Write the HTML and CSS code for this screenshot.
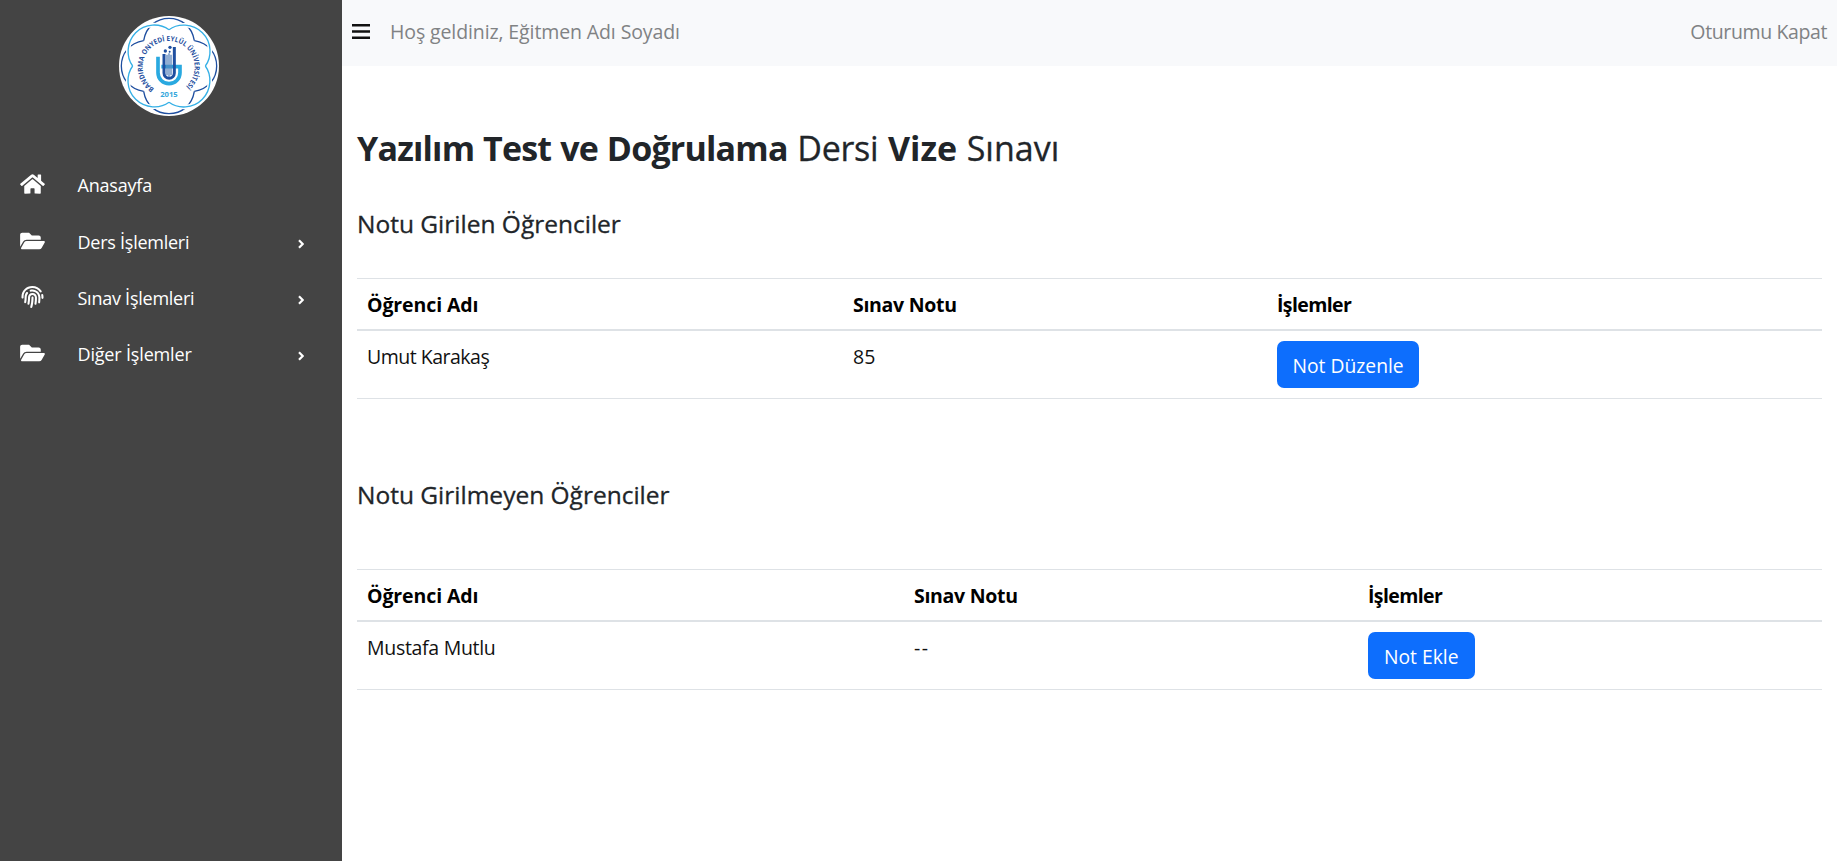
FILE: index.html
```
<!DOCTYPE html>
<html lang="tr">
<head>
<meta charset="utf-8">
<title>Sınav Notları</title>
<link rel="stylesheet" href="styles.css">
</head>
<body>
<svg class="defs" width="0" height="0" aria-hidden="true">
  <symbol id="folder" viewBox="0 0 576 512"><path d="M572.694 292.093L500.27 416.248A63.997 63.997 0 0 1 444.989 448H45.025c-18.523 0-30.064-20.093-20.731-36.093l72.424-124.155A64 64 0 0 1 152 256h399.964c18.523 0 30.064 20.093 20.73 36.093zM152 224h328v-48c0-26.51-21.49-48-48-48H272l-64-64H48C21.49 64 0 85.49 0 112v278.046l69.077-118.418C86.214 242.25 117.989 224 152 224z"/></symbol>
  <symbol id="home" viewBox="0 0 576 512"><path d="M280.37 148.26L96 300.11V464a16 16 0 0 0 16 16l112.06-.29a16 16 0 0 0 15.92-16V368a16 16 0 0 1 16-16h64a16 16 0 0 1 16 16v95.64a16 16 0 0 0 16 16.05L464 480a16 16 0 0 0 16-16V300L295.67 148.26a12.19 12.19 0 0 0-15.3 0zM571.6 251.47L488 182.56V44.05a12 12 0 0 0-12-12h-56a12 12 0 0 0-12 12v72.61L318.47 43a48 48 0 0 0-61 0L4.34 251.47a12 12 0 0 0-1.6 16.9l25.5 31A12 12 0 0 0 45.15 301l235.22-193.74a12.19 12.19 0 0 1 15.3 0L530.9 301a12 12 0 0 0 16.9-1.6l25.5-31a12 12 0 0 0-1.7-16.93z"/></symbol>
  <symbol id="finger" viewBox="0 0 512 512"><path d="M256.12 245.96c-13.25 0-24 10.74-24 24 1.14 72.25-8.14 141.9-27.7 211.55-2.73 9.72 2.15 30.49 23.12 30.49 10.48 0 20.11-6.92 23.09-17.52 13.53-47.91 31.04-125.41 29.48-224.52.01-13.25-10.73-24-23.99-24zm-.86-81.73C194 164.16 151.25 211.3 152.1 265.32c.75 47.75-3.75 95.87-13.37 142.5-2.69 12.98 5.67 25.69 18.64 28.36 12.97 2.68 25.67-5.66 28.36-18.64 10.34-50.09 15.17-101.58 14.37-153.02-.41-25.95 19.92-52.49 54.45-52.34 31.31.47 57.15 25.34 57.62 55.47.77 48.05-2.81 96.33-10.61 143.55-2.17 13.06 6.69 25.42 19.76 27.58 19.97 3.33 26.81-15.1 27.58-19.77 8.28-50.03 12.06-101.21 11.27-152.11-.88-55.8-47.94-101.88-104.91-102.72zm-110.69-19.78c-10.3-8.34-25.37-6.8-33.76 3.48-25.62 31.5-39.39 71.28-38.75 112 .59 37.58-2.47 75.27-9.11 112.05-2.34 13.05 6.31 25.53 19.36 27.89 20.11 3.5 27.07-14.81 27.89-19.36 7.19-39.84 10.5-80.66 9.86-121.33-.47-29.88 9.2-57.88 28-80.97 8.35-10.28 6.79-25.39-3.49-33.76zm109.47-62.33c-15.41-.41-30.87 1.44-45.78 4.97-12.89 3.06-20.87 15.98-17.83 28.89 3.06 12.89 16 20.83 28.89 17.83 11.05-2.61 22.47-3.77 34-3.69 75.43 1.13 137.73 61.5 138.88 134.58.59 37.88-1.28 76.11-5.58 113.63-1.5 13.17 7.95 25.08 21.11 26.58 16.72 1.95 25.51-11.88 26.58-21.11a929.06 929.06 0 0 0 5.89-119.85c-1.56-98.75-85.07-180.33-186.16-181.83zm252.07 121.45c-2.86-12.92-15.51-21.2-28.61-18.27-12.94 2.86-21.12 15.66-18.26 28.61 4.71 21.41 4.91 37.41 4.7 61.6-.11 13.27 10.55 24.09 23.8 24.2h.2c13.17 0 23.89-10.61 24-23.8.18-22.18.4-44.11-5.83-72.34zm-40.12-90.72C417.29 43.46 337.6 1.29 252.81.02 183.02-.82 118.47 24.91 70.46 72.94 24.09 119.37-.9 181.04.14 246.65l-.12 21.47c-.39 13.25 10.03 24.31 23.28 24.69.23.02.48.02.72.02 12.92 0 23.59-10.3 23.97-23.3l.16-23.64c-.83-52.5 19.16-101.86 56.28-139 38.76-38.8 91.34-59.67 147.68-58.86 69.45 1.03 134.73 35.56 174.62 92.39 7.61 10.86 22.56 13.45 33.42 5.86 10.84-7.62 13.46-22.59 5.84-33.43z"/></symbol>
  <symbol id="chev" viewBox="0 0 6 10"><path d="M1 1.2 4.7 5 1 8.8" fill="none" stroke="#fff" stroke-width="2.2"/></symbol>
</svg>
<div class="page">
  <nav class="sidebar">
    <svg class="logo" viewBox="27 24 300 300">
      <defs>
        <path id="navyLobe" d="M101 98C108 55 140 31 177 31S246 55 253 98"/>
        <path id="cyanLobe" d="M177 65C150 45 105 45 77 74S48 147 68 174"/>
        <path id="ring" d="M133 242A78 78 0 1 1 223 239"/>
      </defs>
      <circle cx="177" cy="174" r="150" fill="#fff"/>
      <g fill="none" stroke="#1f4fa0" stroke-width="4">
        <use href="#navyLobe"/><use href="#navyLobe" transform="rotate(90 177 174)"/><use href="#navyLobe" transform="rotate(180 177 174)"/><use href="#navyLobe" transform="rotate(270 177 174)"/>
      </g>
      <g fill="none" stroke="#fff" stroke-width="13">
        <use href="#cyanLobe"/><use href="#cyanLobe" transform="rotate(90 177 174)"/><use href="#cyanLobe" transform="rotate(180 177 174)"/><use href="#cyanLobe" transform="rotate(270 177 174)"/>
      </g>
      <g fill="none" stroke="#35b0e6" stroke-width="4">
        <use href="#cyanLobe"/><use href="#cyanLobe" transform="rotate(90 177 174)"/><use href="#cyanLobe" transform="rotate(180 177 174)"/><use href="#cyanLobe" transform="rotate(270 177 174)"/>
      </g>
      <text class="ring-text"><textPath href="#ring" textLength="388" lengthAdjust="spacingAndGlyphs">BANDIRMA ONYEDİ EYLÜL ÜNİVERSİTESİ</textPath></text>
      <path d="M144 146v48a33 33 0 0 0 66 0v-18h-56" fill="none" stroke="#29a9e0" stroke-width="11"/>
      <path d="M171 140v62M177 136v70M183 140v62" stroke="#5b86bd" stroke-width="4"/>
      <path d="M162 138v57a15.500 15.500 0 0 0 31 0v-78" fill="none" stroke="#1f4fa0" stroke-width="9"/>
      <circle cx="180" cy="118" r="5" fill="#1f4fa0"/><circle cx="166" cy="129" r="5" fill="#1f4fa0"/><circle cx="179" cy="131" r="3" fill="#1f4fa0"/>
      <text x="177" y="266" class="year">2015</text>
    </svg>
    <ul class="menu">
      <li class="first"><svg class="ico"><use href="#home"/></svg><span class="l1">Anasayfa</span></li>
      <li><svg class="ico"><use href="#folder"/></svg><span class="l2">Ders İşlemleri</span><svg class="chev"><use href="#chev"/></svg></li>
      <li><svg class="ico"><use href="#finger"/></svg><span class="l2">Sınav İşlemleri</span><svg class="chev"><use href="#chev"/></svg></li>
      <li><svg class="ico"><use href="#folder"/></svg><span class="l3">Diğer İşlemler</span><svg class="chev"><use href="#chev"/></svg></li>
    </ul>
  </nav>
  <div class="main">
    <header class="topbar">
      <svg class="burger" viewBox="0 0 18 15"><path d="M0 1.200h18M0 7.500h18M0 13.800h18" stroke="#111" stroke-width="2.400"/></svg>
      <span class="welcome">Hoş geldiniz, Eğitmen Adı Soyadı</span>
      <span class="logout">Oturumu Kapat</span>
    </header>
    <main class="content">
      <h3><b class="course">Yazılım Test ve Doğrulama</b> <span class="word">Dersi</span> <b>Vize</b> <span>Sınavı</span></h3>
      <h5>Notu Girilen Öğrenciler</h5>
      <table class="graded">
        <thead><tr><th class="c1">Öğrenci Adı</th><th class="c2 note">Sınav Notu</th><th class="ops">İşlemler</th></tr></thead>
        <tbody><tr><td class="umut">Umut Karakaş</td><td>85</td><td class="action"><button>Not Düzenle</button></td></tr></tbody>
      </table>
      <h5 class="second">Notu Girilmeyen Öğrenciler</h5>
      <table class="ungraded">
        <thead><tr><th class="c1">Öğrenci Adı</th><th class="c2 note">Sınav Notu</th><th class="ops">İşlemler</th></tr></thead>
        <tbody><tr><td class="mustafa">Mustafa Mutlu</td><td class="empty">--</td><td class="action"><button class="add">Not Ekle</button></td></tr></tbody>
      </table>
    </main>
  </div>
</div>
</body>
</html>
```
FILE: styles.css
```
* { box-sizing: border-box; }
body { margin: 0; background: #fff; color: #212529; font: 19.5px/30px "Open Sans", "Noto Sans", sans-serif; }
.defs { display: block; width: 0; height: 0; }
.page { display: flex; height: 861px; overflow: hidden; }
.sidebar { width: 342px; flex: none; background: #444; color: #fff; padding-top: 16px; }
.logo { display: block; width: 100px; height: 100px; margin-left: 119px; }
.ring-text { font: 700 21px "Open Sans", sans-serif; fill: #1f4fa0; }
.year { font: 700 23px "Open Sans", sans-serif; fill: #35a8dc; text-anchor: middle; }
.menu { list-style: none; margin: 41px 0 0; padding: 0; font-size: 18px; }
.menu li { display: flex; align-items: center; height: 56px; padding: 0 38px 0 20px; }
.menu .first { height: 57px; }
.ico { width: 25px; height: 22px; fill: #fff; margin: 0 32.500px 3px 0; }
.l1 { letter-spacing: -.2px; padding-bottom: 2px; }
.l2 { letter-spacing: -.25px; }
.l3 { letter-spacing: -.17px; }
.chev { width: 6px; height: 10px; margin-left: auto; margin-top: 3px; }
.main { flex: 1; }
.topbar { height: 66px; display: flex; align-items: center; background: #f8f9fb; padding: 0 10px 3px 10px; color: #808284; }
.burger { width: 18px; height: 15px; margin-right: 20px; }
.welcome { letter-spacing: -.11px; }
.logout { margin-left: auto; letter-spacing: -.38px; }
.content { padding: 61px 15px 0; }
h3, h5 { margin: 0; font-weight: 400; }
h3 { font-size: 34px; line-height: 42px; word-spacing: .8px; white-space: nowrap; }
h3 span { -webkit-text-stroke: .3px #212529; }
h3 b { font-weight: 700; }
.course { letter-spacing: -.8px; }
.word { letter-spacing: -.3px; }
h5 { font-size: 24.500px; line-height: 30px; margin-top: 40px; -webkit-text-stroke: .3px #212529; }
h5.second { margin-top: 81px; }
table { width: 1465px; table-layout: fixed; border-collapse: separate; border-spacing: 0; border-top: 1px solid #dee2e6; color: #111; }
.graded { margin-top: 39px; }
.ungraded { margin-top: 59px; }
th, td { padding: 11px 10px 9px; text-align: left; vertical-align: top; }
th { color: #000; font-weight: 700; border-bottom: 2px solid #dee2e6; height: 52px; }
td { border-bottom: 1px solid #dee2e6; height: 68px; }
.action { padding: 10px; }
.graded .c1 { width: 486px; }
.graded .c2 { width: 424px; }
.ungraded .c1 { width: 547px; }
.ungraded .c2 { width: 454px; }
.c1 { letter-spacing: -.1px; }
.note { letter-spacing: -.3px; }
.ops { letter-spacing: -.6px; }
.umut { letter-spacing: -.5px; }
.mustafa { letter-spacing: -.3px; }
.empty { letter-spacing: 1.500px; }
button { display: block; height: 47px; border: 0; border-radius: 7px; background: #0d6efd; color: #fff; padding: 2px 15.500px 0; font: 19.300px/30px "Open Sans", sans-serif; }
.add { padding: 2px 16px 0; }
```
